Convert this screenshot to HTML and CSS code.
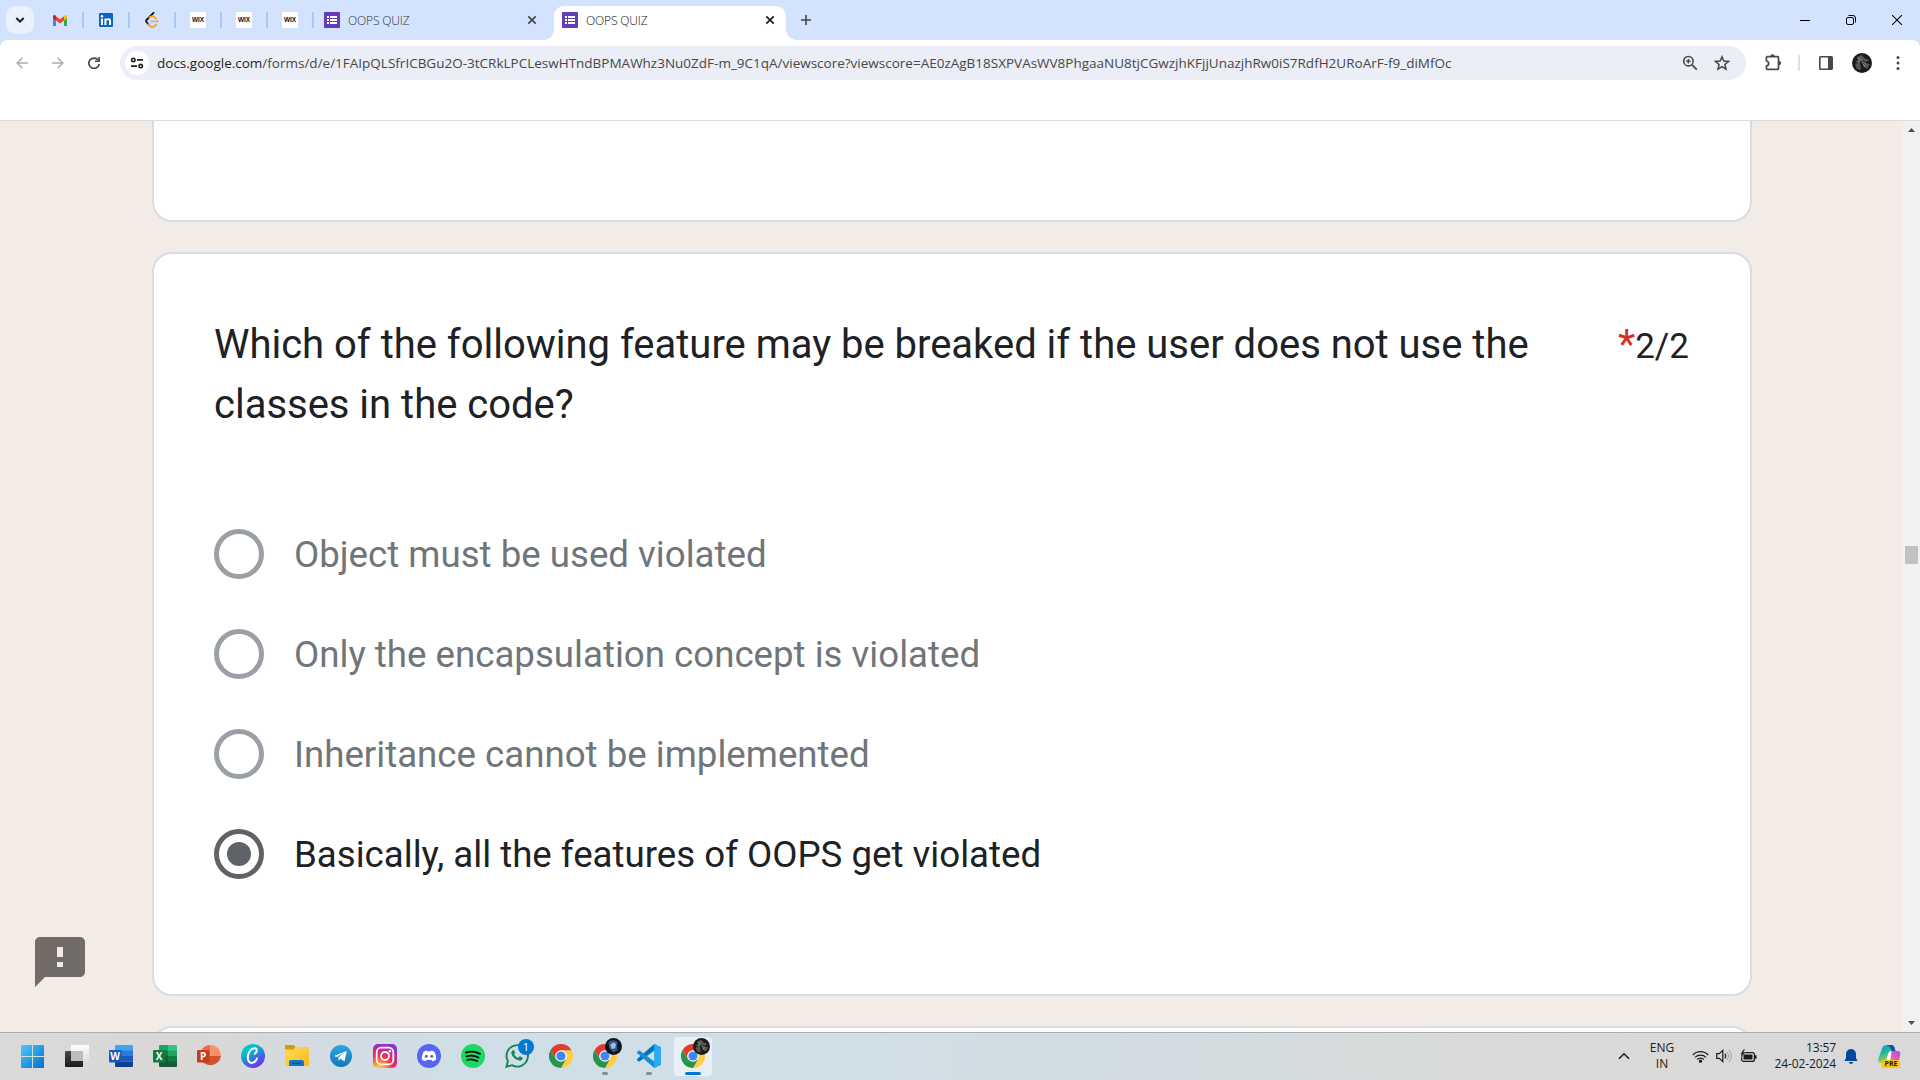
FILE: index.html
```html
<!DOCTYPE html>
<html lang="en">
<head>
<meta charset="utf-8">
<title>OOPS QUIZ</title>
<link rel="stylesheet" href="styles.css">
</head>
<body>
<svg class="defs" width="0" height="0">
  <defs>
    <linearGradient id="gWin" x1="0" y1="0" x2="1" y2="1"><stop offset="0" stop-color="#4cc9fb"/><stop offset="1" stop-color="#0070d0"/></linearGradient>
    <linearGradient id="gDark" x1="0" y1="0" x2="0" y2="1"><stop offset="0" stop-color="#484848"/><stop offset="1" stop-color="#1b1b1b"/></linearGradient>
    <linearGradient id="gLight" x1="0" y1="0" x2="0" y2="1"><stop offset="0" stop-color="#ffffff"/><stop offset="1" stop-color="#dedede"/></linearGradient>
    <linearGradient id="gCanva" x1="0.1" y1="0" x2="0.7" y2="1"><stop offset="0" stop-color="#00c4cc"/><stop offset="0.3" stop-color="#00c0cc"/><stop offset="0.65" stop-color="#3a6fe0"/><stop offset="1" stop-color="#7d2ae8"/></linearGradient>
    <linearGradient id="gFolder" x1="0" y1="0" x2="1" y2="1"><stop offset="0" stop-color="#ffdb5c"/><stop offset="1" stop-color="#fcb91c"/></linearGradient>
    <linearGradient id="gTele" x1="0" y1="0" x2="0" y2="1"><stop offset="0" stop-color="#2ea6de"/><stop offset="1" stop-color="#0f78b6"/></linearGradient>
    <radialGradient id="gInsta" cx="0.25" cy="1.05" r="1.15"><stop offset="0" stop-color="#ffdd55"/><stop offset="0.22" stop-color="#ff9a3c"/><stop offset="0.5" stop-color="#f0304f"/><stop offset="0.75" stop-color="#c8279b"/><stop offset="1" stop-color="#7638d8"/></radialGradient>
    <linearGradient id="gCop1" x1="0" y1="0" x2="0.4" y2="1"><stop offset="0" stop-color="#1590e8"/><stop offset="0.5" stop-color="#25b89a"/><stop offset="1" stop-color="#c8d63c"/></linearGradient>
    <linearGradient id="gCop2" x1="0" y1="1" x2="1" y2="0"><stop offset="0" stop-color="#ff8a5c"/><stop offset="0.5" stop-color="#e65cb0"/><stop offset="1" stop-color="#a24ff0"/></linearGradient>
    <symbol id="close" viewBox="0 0 10 10"><path d="M1.3 1.3l7.4 7.4M8.7 1.3L1.3 8.7" fill="none" stroke="currentColor" stroke-width="1.7"/></symbol>
    <symbol id="forms" viewBox="0 0 16 16"><rect width="16" height="16" rx="1" fill="#673ab7"/><path d="M3 4h2v2H3zM6 4h7v2H6zM3 7h2v2H3zM6 7h7v2H6zM3 10h2v2H3zM6 10h7v2H6z" fill="#fff"/></symbol>
    <symbol id="chrome" viewBox="0 0 48 48">
      <path d="M34 30L24 48A24 24 0 0 0 45.1 12.5H24z" fill="#ffcd40"/>
      <path d="M24 12.5H45.1A24 24 0 0 0 3.2 12L14 30.5z" fill="#e33b2e"/>
      <path d="M14 30.3L3.2 12A24 24 0 0 0 24 48l10-17.7z" fill="#26944a"/>
      <circle cx="24" cy="24" r="11.6" fill="#fff"/><circle cx="24" cy="24" r="9.2" fill="#4285f4"/>
    </symbol>
    <symbol id="avatar" viewBox="0 0 20 20"><circle cx="10" cy="10" r="10" fill="#1b1b1b"/><path d="M5 4l5-2 2 3 5 2-3 2-4-2-4 2zM12 10l6 1-3 5-4-3zM3 12l5-4 1 9-4-1z" fill="#6b6b6b" opacity=".75"/><path d="M6 5l8 6M10 9l3 5M4 9l4-1" stroke="#a8a8a8" stroke-width=".7"/></symbol>
  </defs>
</svg>

<header class="tabstrip">
  <div class="tab-search"><svg width="12" height="12" viewBox="0 0 12 12"><path d="M2.3 4l3.7 3.7L9.7 4" fill="none" stroke="#1f1f1f" stroke-width="2"/></svg></div>
  <div class="pinned"><svg width="14" height="11" viewBox="0 0 14 11"><path d="M0 1v9.2a.7.7 0 0 0 .8.8H3V5z" fill="#4285f4"/><path d="M11 5v6h2.200a.8.8 0 0 0 .8-.8V1.500z" fill="#34a853"/><path d="M11 1.200V5.600l3-2.300V1.500C14 .1 12.500-.5 11.400.400z" fill="#fbbc04"/><path d="M3 5.600V1.200l4 3 4-3v4.400l-4 3z" fill="#ea4335"/><path d="M0 1.500v1.800l3 2.300V1.200L2.600.400C1.500-.5 0 .100 0 1.500z" fill="#c5221f"/></svg></div>
  <div class="pinned"><svg width="14" height="14" viewBox="0 0 14 14"><rect width="14" height="14" rx="1" fill="#0a66c2"/><path d="M2 5.400h2V12H2zM5.400 5.400h2v.9c.4-.7 1.100-1.100 2-1.100 2 0 2.600 1.200 2.600 3.100V12h-2V8.700c0-.9-.2-1.600-1.100-1.600-1 0-1.500.7-1.500 1.700V12h-2z" fill="#fff"/><circle cx="3" cy="3.200" r="1.200" fill="#fff"/></svg></div>
  <div class="pinned"><svg width="14" height="16" viewBox="0 0 14 16"><path d="M8.500.8L1.500 8a1.600 1.600 0 0 0 0 2l2 2.300" fill="none" stroke="#111" stroke-width="1.900" stroke-linecap="round"/><path d="M3.300 12.200l2 2.100c1.200 1 3 1 4.100 0l1.700-1.700M4.500 5.500c2-1.700 3.600-1.500 4.600-.6L11 6.600" fill="none" stroke="#ffa116" stroke-width="1.900" stroke-linecap="round"/><path d="M6 9.400h7" stroke="#b3b3b3" stroke-width="1.800" stroke-linecap="round"/></svg></div>
  <div class="pinned"><span class="wix">WIX</span></div>
  <div class="pinned"><span class="wix">WIX</span></div>
  <div class="pinned"><span class="wix">WIX</span></div>
  <div class="tab"><svg width="16" height="16"><use href="#forms"/></svg><span>OOPS QUIZ</span><svg class="x" width="10" height="10"><use href="#close"/></svg></div>
  <div class="tab active"><svg width="16" height="16"><use href="#forms"/></svg><span>OOPS QUIZ</span><svg class="x" width="10" height="10"><use href="#close"/></svg></div>
  <svg class="newtab" width="10" height="10" viewBox="0 0 10 10"><path d="M5 0v10M0 5h10" stroke="#474747" stroke-width="1.600"/></svg>
  <div class="winctl">
    <svg width="10" height="10"><path d="M0 5.500h10" stroke="#000"/></svg>
    <svg width="10" height="10"><rect x=".5" y="2.500" width="7" height="7" rx="1.500" fill="none" stroke="#000"/><path d="M2.500.5H7a2.500 2.500 0 0 1 2.500 2.500v4.500" fill="none" stroke="#000"/></svg>
    <svg width="10" height="10"><path d="M0 0l10 10M10 0L0 10" stroke="#000" stroke-width="1.100"/></svg>
  </div>
</header>

<div class="corners">
<div class="toolbar">
  <div class="nav">
    <svg width="12" height="12" viewBox="0 0 12 12"><path d="M12 6H1.500M6.400.7L1.100 6l5.300 5.300" fill="none" stroke="#adadad" stroke-width="1.500"/></svg>
    <svg width="12" height="12" viewBox="0 0 12 12"><path d="M0 6h10.500M5.600.7L10.900 6l-5.300 5.300" fill="none" stroke="#adadad" stroke-width="1.500"/></svg>
    <svg width="12" height="12" viewBox="0 0 12 12"><path d="M10.200 3.100A5.200 5.200 0 1 0 11.200 7" fill="none" stroke="#474747" stroke-width="1.700"/><path d="M11.900 0v5H7V3.400h3.300V0z" fill="#474747"/></svg>
  </div>
  <div class="omnibox">
    <div class="site"><svg width="14" height="12" viewBox="0 0 14 12"><g fill="none" stroke="#1f1f1f" stroke-width="1.600"><circle cx="3.300" cy="2.900" r="1.700"/><path d="M7 2.900h6M1 9.100h6"/><circle cx="10.700" cy="9.100" r="1.700"/></g></svg></div>
    <div class="url"><b>docs.google.com</b>/forms/d/e/1FAIpQLSfrICBGu2O-3tCRkLPCLeswHTndBPMAWhz3Nu0ZdF-m_9C1qA/viewscore?viewscore=AE0zAgB18SXPVAsWV8PhgaaNU8tjCGwzjhKFjjUnazjhRw0iS7RdfH2URoArF-f9_diMfOc</div>
    <svg width="16" height="16" viewBox="0 0 16 16"><circle cx="6.400" cy="6.200" r="4.700" fill="none" stroke="#474747" stroke-width="1.600"/><path d="M9.800 9.700l5 5" stroke="#474747" stroke-width="1.800"/><path d="M6.400 4v4.400M4.200 6.200h4.400" stroke="#474747" stroke-width="1.500"/></svg>
    <svg width="16" height="16" viewBox="0 0 16 16"><path d="M8 1.800l1.800 4.300 4.700.4-3.600 3 1.100 4.600L8 11.700l-4 2.400 1.100-4.600-3.600-3 4.700-.4z" fill="none" stroke="#474747" stroke-width="1.500"/></svg>
  </div>
  <div class="tools">
    <svg width="18" height="18" viewBox="0 0 18 18"><path d="M2.400 7V3.500q0-.9.900-.9h10.300q.9 0 .9.900v11q0 .9-.9.900H3.300q-.9 0-.9-.9V12c3-.6 3-4.400 0-5z" fill="none" stroke="#474747" stroke-width="1.700" stroke-linejoin="round"/><path d="M6.400 2.400a2.100 2.100 0 0 1 4.200 0zM15 7a2.100 2.100 0 0 1 0 4.200z" fill="#474747"/></svg>
    <i></i>
    <svg width="14" height="14" viewBox="0 0 14 14"><rect x=".8" y=".8" width="12.400" height="12.400" rx=".8" fill="none" stroke="#474747" stroke-width="1.600"/><path d="M9 1h4v12H9z" fill="#474747"/></svg>
    <svg width="20" height="20"><use href="#avatar"/></svg>
    <svg width="4" height="14" viewBox="0 0 4 14"><g fill="#474747"><circle cx="2" cy="1.600" r="1.500"/><circle cx="2" cy="7" r="1.500"/><circle cx="2" cy="12.400" r="1.500"/></g></svg>
  </div>
</div>
</div>

<main class="viewport">
  <section class="form">
    <article class="card previous"></article>
    <article class="card question">
      <div class="heading">
        <h1>Which of the following feature may be breaked if the user does not use the classes in the code?</h1>
        <div class="score"><em>*</em>2/2</div>
      </div>
      <div class="option"><span class="radio"></span><span>Object must be used violated</span></div>
      <div class="option"><span class="radio"></span><span>Only the encapsulation concept is violated</span></div>
      <div class="option"><span class="radio"></span><span>Inheritance cannot be implemented</span></div>
      <div class="option selected"><span class="radio"></span><span>Basically, all the features of OOPS get violated</span></div>
    </article>
    <article class="card next"></article>
  </section>
  <aside class="scrollbar">
    <svg width="7" height="4"><path d="M3.500 0L7 4H0z" fill="#505050"/></svg>
    <div class="thumb"></div>
    <svg width="7" height="4"><path d="M0 0h7L3.500 4z" fill="#505050"/></svg>
  </aside>
  <svg class="report" width="50" height="50" viewBox="2 2 20 20"><path d="M20 2H4c-1.100 0-2 .9-2 2v18l4-4h14c1.100 0 2-.9 2-2V4c0-1.100-.9-2-2-2zm-6.800 12h-2.400v-2h2.400zm0-4h-2.400V6h2.400z" fill="#716c68"/></svg>
</main>

<footer class="taskbar">
  <div class="apps">
    <div class="app"><svg width="23" height="23" viewBox="0 0 23 23"><path d="M0 1a1 1 0 0 1 1-1h10v11H0zM12 0h10a1 1 0 0 1 1 1v10H12zM0 12h11v11H1a1 1 0 0 1-1-1zM12 12h11v10a1 1 0 0 1-1 1H12z" fill="url(#gWin)"/></svg></div>
    <div class="app"><svg width="24" height="24" viewBox="0 0 24 24"><rect x="0" y="7" width="18" height="16" rx="1" fill="url(#gDark)"/><rect x="6" y="1" width="18" height="16" rx="1" fill="url(#gLight)"/><path d="M6 7h12v10H6z" fill="#bcbcbc"/></svg></div>
    <div class="app"><svg width="24" height="24" viewBox="0 0 24 24"><path d="M6 2a1 1 0 0 1 1-1h16a1 1 0 0 1 1 1v5H6z" fill="#41a5ee"/><path d="M6 6.500h18V12H6z" fill="#2b7cd3"/><path d="M6 12h18v5.500H6z" fill="#185abd"/><path d="M6 17.500h18V22a1 1 0 0 1-1 1H7a1 1 0 0 1-1-1z" fill="#103f91"/><rect y="6" width="12.500" height="12.500" rx="1" fill="#185abd"/><text class="letter" x="6.200" y="15.700">W</text></svg></div>
    <div class="app"><svg width="24" height="24" viewBox="0 0 24 24"><path d="M6 2a1 1 0 0 1 1-1h8v6H6z" fill="#21a366"/><path d="M15 1h8a1 1 0 0 1 1 1v5h-9z" fill="#33c481"/><path d="M6 6.500h9V12H6z" fill="#107c41"/><path d="M15 6.500h9V12h-9z" fill="#21a366"/><path d="M6 12h18v10a1 1 0 0 1-1 1H7a1 1 0 0 1-1-1z" fill="#185c37"/><path d="M15 12h9v5.500h-9z" fill="#107c41"/><rect y="6" width="12.500" height="12.500" rx="1" fill="#107c41"/><text class="letter" x="6.200" y="15.700">X</text></svg></div>
    <div class="app"><svg width="24" height="24" viewBox="0 0 24 24"><path d="M13.500 1A10.700 10.700 0 0 0 2.800 12h10.700z" fill="#ed6c47"/><path d="M13.500 1A10.700 10.700 0 0 1 24 12H13.500z" fill="#ff8f6b"/><path d="M2.800 12A10.700 10.700 0 0 0 24 12z" fill="#d35230"/><rect y="6" width="12.500" height="12.500" rx="1" fill="#c43e1c"/><text class="letter" x="6.200" y="15.700">P</text></svg></div>
    <div class="app"><svg width="24" height="24" viewBox="0 0 24 24"><circle cx="12" cy="12" r="12" fill="url(#gCanva)"/><path d="M13.800 9.700c2-.8 3-4.800.4-5.400C10.300 3.600 6.500 9 6.800 14c.2 3.300 2 5.300 4.500 4.800 2.400-.4 4-2.400 4.700-4.300" fill="none" stroke="#fff" stroke-width="2" stroke-linecap="round"/></svg></div>
    <div class="app"><svg width="24" height="24" viewBox="0 0 24 24"><path d="M0 2a1 1 0 0 1 1-1h7.500l2 2-2 3H0z" fill="#d99a00"/><path d="M0 5.500h8.500L11 3h12a1 1 0 0 1 1 1v17a1 1 0 0 1-1 1H1a1 1 0 0 1-1-1z" fill="url(#gFolder)"/><path d="M4 22v-4a2 2 0 0 1 2-2h11a2 2 0 0 1 2 2v4z" fill="#1074c5"/><path d="M7 18.700h9v1.200H7z" fill="#0b4f91"/></svg></div>
    <div class="app"><svg width="22" height="22" viewBox="0 0 22 22"><circle cx="11" cy="11" r="11" fill="url(#gTele)"/><path d="M4 11l12.700-4.900-2.200 10.500-4-2.900-1.900 1.800-.3-3 6-5-7.600 4.600z" fill="#fff"/></svg></div>
    <div class="app"><svg width="24" height="24" viewBox="0 0 24 24"><rect width="24" height="24" rx="5" fill="url(#gInsta)"/><g fill="none" stroke="#fff" stroke-width="1.800"><rect x="3.700" y="3.700" width="16.600" height="16.600" rx="4.500"/><circle cx="12" cy="12" r="4"/></g><circle cx="16.900" cy="7.200" r="1.200" fill="#fff"/></svg></div>
    <div class="app"><svg width="24" height="24" viewBox="0 0 24 24"><circle cx="12" cy="12" r="12" fill="#5865f2"/><path d="M9.800 6.500l.6 1q1.600-.3 3.200 0l.6-1q1.800.3 3.200 1.200c1.300 2.500 2 5 1.800 7.700-1.200 1-2.500 1.600-3.900 1.900l-.9-1.500q-2.400.6-4.800 0l-.9 1.500c-1.400-.3-2.700-.9-3.900-1.900-.2-2.700.5-5.200 1.800-7.700q1.400-.9 3.200-1.200z" fill="#fff"/><circle cx="9.300" cy="12.300" r="1.500" fill="#5865f2"/><circle cx="14.700" cy="12.300" r="1.500" fill="#5865f2"/></svg></div>
    <div class="app"><svg width="24" height="24" viewBox="0 0 24 24"><circle cx="12" cy="12" r="12" fill="#1ed760"/><path d="M5 8.500q7.500-2.200 14 1.300M5.500 12.300q6.500-1.800 12 1.300M6.200 15.800q5.300-1.300 9.800 1.200" fill="none" stroke="#0b0b0b" stroke-width="1.900" stroke-linecap="round"/></svg></div>
    <div class="app"><svg width="24" height="24" viewBox="0 0 24 24"><path d="M1.400 22.700l1.500-5.600A10.700 10.700 0 1 1 7 21.200z" fill="none" stroke="#168653" stroke-width="1.900"/><path d="M7.500 6.500c.8-.7 1.500-.5 1.800.2l.8 1.900c.1.500-.3 1-.9 1.700.9 1.700 2.200 2.900 4 3.700l1.200-1.400c.3-.3.600-.3 1-.1l1.900.9c.5.300.4 1 .1 1.700-.6 1.200-2 1.800-3.400 1.500-4-1-6.600-3.700-7.600-6.900-.3-1.300.2-2.400 1.100-3.200z" fill="#168653"/></svg><span class="count">1</span></div>
    <div class="app"><svg width="24" height="24"><use href="#chrome"/></svg></div>
    <div class="app running"><svg width="24" height="24"><use href="#chrome"/></svg><svg class="profile" width="17" height="17" viewBox="0 0 20 20"><circle cx="10" cy="10" r="10" fill="#10141c"/><path d="M4 5q5-5 11 0l-1 5 1 4-5 3-5-5z" fill="#31568d"/><path d="M6 8l4-3 3 2-1 5-4 1z" fill="#9ebbd9"/></svg></div>
    <div class="app running"><svg width="24" height="24" viewBox="0 0 24 24"><path d="M18 0v6L2.200 17.700.3 16.200q-.6-.7 0-1.400L17 .2z" fill="#0074be"/><path d="M18 24v-6L2.200 6.300.3 7.800q-.6.700 0 1.400L17 23.800z" fill="#168fd8"/><path d="M17.500 0L24 3v18l-6.500 3q-.7 0-.4-1V1q-.3-1 .4-1z" fill="#29a9f2"/></svg></div>
    <div class="app running current"><svg width="24" height="24"><use href="#chrome"/></svg><svg class="profile" width="17" height="17"><use href="#avatar"/></svg></div>
  </div>
  <div class="tray">
    <svg width="12" height="8" viewBox="0 0 12 8"><path d="M1 6.800l5-5 5 5" fill="none" stroke="#1b1b1b" stroke-width="1.500"/></svg>
    <div class="lang">ENG<br>IN</div>
    <svg class="wifi" width="17" height="13" viewBox="0 0 17 13"><g fill="none" stroke="#1b1b1b" stroke-width="1.200"><path d="M.8 5A10.600 10.600 0 0 1 16.200 5M3 7.400a7.700 7.700 0 0 1 11 0M5.200 9.500a4.600 4.600 0 0 1 6.600 0"/></g><circle cx="8.500" cy="11.200" r="1.600" fill="#1b1b1b"/></svg>
    <svg class="sound" width="16" height="14" viewBox="0 0 16 14"><g fill="none" stroke-width="1.200"><path d="M.7 4.700h2.600L6.800 1.400v11.200L3.300 9.300H.7zM9 4.700q1.500 2.300 0 4.600" stroke="#1b1b1b"/><path d="M11 3q3 4 0 8M13 1q4.300 6 0 12" stroke="#aaa"/></g></svg>
    <svg width="17" height="14" viewBox="0 0 17 14"><rect x="1.600" y="3.600" width="12.800" height="8.800" rx="2" fill="none" stroke="#1b1b1b" stroke-width="1.200"/><path d="M3.500 5.500h9v5h-9z" fill="#1b1b1b"/><path d="M15 6.300h1.500v3.400H15z" fill="#1b1b1b"/><path d="M3.800 0L.3 5h2L1.500 8.500 5.500 3.800H3.600L5 0z" fill="#1b1b1b" stroke="#d9d9d9" stroke-width=".4"/></svg>
    <div class="clock">13:57<br>24-02-2024</div>
    <svg class="bell" width="14" height="15" viewBox="0 0 14 15"><path d="M7 0a5 5 0 0 0-5 5v4L.4 12h13.200L12 9V5a5 5 0 0 0-5-5zM4.800 13h4.400Q8.700 15 7 15t-2.200-2z" fill="#00489c"/></svg>
    <div class="copilot"><svg width="24" height="24" viewBox="0 0 24 24"><path d="M5 4.500Q6 1 9.500 1h5q2.300 0 3 2.500L18.500 7H14q-2 0-2.700 2.300L9 17q-.6 2-2.500 2H4q-3.500 0-2.700-4z" fill="url(#gCop1)"/><path d="M9.500 1h5q2.300 0 3 2.500L18.500 7h-4q-1-5-5-6z" fill="#164bb8"/><path d="M15 7h5.500q3.500 0 2.700 4L22 16q-.8 3-4 3h-7l2.200-10q.5-2 1.800-2z" fill="url(#gCop2)"/><path d="M14.500 7q-2.200 0-3 2.500L9 18h2q1.800-.5 2.500-3z" fill="#fff"/></svg><b>PRE</b></div>
  </div>
</footer>
</body>
</html>
```
FILE: styles.css
```css
* { box-sizing: border-box; }
body {
  margin: 0;
  width: 1920px;
  height: 1080px;
  overflow: hidden;
  display: flex;
  flex-direction: column;
  font-family: "Open Sans", "Noto Sans", sans-serif;
  background: #fff;
}
svg { display: block; flex: none; }
.defs { position: absolute; }

/* Tab strip */
.tabstrip { height: 40px; flex: none; display: flex; align-items: center; background: #d3e3fd; padding-left: 6px; }
.tab-search { width: 28px; height: 28px; border-radius: 10px; background: #e9f1fe; display: grid; place-items: center; margin-right: 4px; }
.pinned { width: 46px; height: 16px; display: flex; align-items: center; justify-content: center; border-right: 2px solid #a8c7fa; }
.wix { width: 16px; height: 16px; background: #fff; color: #111; font: bold 6.5px/16px "Liberation Sans", sans-serif; text-align: center; letter-spacing: -.1px; }
.tab { width: 240px; height: 34px; padding: 0 17px 6px 10px; display: flex; align-items: center; gap: 8px; align-self: flex-end; color: #333; font-size: 12px; }
.tab span { flex: 1; font-weight: 300; letter-spacing: -.15px; }
.tab .x { color: #474747; }
.tab.active { position: relative; width: 232px; padding: 0 11px 6px 8px; background: #fff; border-radius: 10px 10px 0 0; color: #111; }
.tab.active .x { color: #1f1f1f; }
.tab.active::before, .tab.active::after { content: ""; position: absolute; bottom: 0; width: 10px; height: 10px; }
.tab.active::before { left: -10px; background: radial-gradient(circle at 0 0, transparent 9.500px, #fff 10px); }
.tab.active::after { right: -10px; background: radial-gradient(circle at 100% 0, transparent 9.500px, #fff 10px); }
.newtab { margin-left: 15px; }
.winctl { margin-left: auto; display: flex; gap: 36px; padding-right: 18px; }

/* Toolbar */
.corners { background: #d3e3fd; flex: none; }
.toolbar { height: 81px; background: #fff; border-radius: 8px 8px 0 0; border-bottom: 1px solid #dcdcdc; display: flex; align-items: flex-start; padding-top: 6px; }
.nav { width: 120px; height: 34px; padding-left: 16px; display: flex; gap: 24px; align-items: center; }
.omnibox { width: 1626px; height: 34px; border-radius: 17px; background: #ebeef7; display: flex; align-items: center; gap: 16px; padding: 0 16px 0 5px; }
.site { width: 24px; height: 24px; border-radius: 50%; background: #fff; display: grid; place-items: center; }
.url { flex: 1; margin-left: -8px; white-space: nowrap; color: #474747; font-size: 13.5px; line-height: 20px; }
.url b { font-weight: 400; color: #1f1f1f; }
.tools { height: 34px; flex: 1; display: flex; align-items: center; padding-left: 18px; }
.tools i { width: 2px; height: 16px; background: #d3e3fd; margin: 0 19px 0 16px; }
.tools svg:nth-of-type(3) { margin: 0 24px 0 19px; }

/* Page */
.viewport { height: 911px; flex: none; position: relative; display: flex; background: #f3ebe6; }
.form { width: 1903px; height: 911px; overflow: hidden; padding-left: 152px; display: flex; flex-direction: column; gap: 30px; }
.card { width: 1600px; flex: none; background: #fff; border: 2px solid #dadce0; border-radius: 20px; }
.previous { height: 101px; border-top: 0; border-radius: 0 0 20px 20px; }
.question { height: 744px; padding: 60px; font-family: Roboto, sans-serif; }
.next { height: 60px; }
.heading { display: flex; justify-content: space-between; height: 190px; color: #202124; }
h1 { width: 1340px; margin: 0; padding-top: 1px; font-weight: 400; font-size: 40px; line-height: 60px; letter-spacing: -.015px; }
.score { margin-right: 1px; font-size: 35px; line-height: 62px; }
.score em { font-style: normal; color: #d93025; font-size: 40px; }
.option { height: 100px; display: flex; align-items: center; gap: 30px; font-size: 36.667px; color: #70757a; }
.radio { width: 50px; height: 50px; border: 5px solid #9aa0a6; border-radius: 50%; display: grid; place-items: center; }
.selected { color: #202124; }
.selected .radio { border-color: #5f6368; }
.selected .radio::after { content: ""; width: 24px; height: 24px; border-radius: 50%; background: #5f6368; }
.scrollbar { width: 17px; background: #f1f1f1; display: flex; flex-direction: column; align-items: center; justify-content: space-between; padding: 7px 0; }
.thumb { width: 13px; height: 18px; background: #c1c1c1; margin-top: -43px; }
.report { position: absolute; left: 35px; top: 816px; }

/* Taskbar */
.taskbar { height: 48px; flex: none; display: flex; justify-content: space-between; border-top: 1px solid #a9adaf; padding-left: 10px; background: linear-gradient(90deg, #d9dad9 0, #dad8d6 150px, #d7d9da 250px, #d2dce5 340px, #d0dfe7 480px, #d0dfe7 800px, #d4dcdf 1250px, #dcdad8 1550px, #d9d9d9 1750px); }
.apps { display: flex; }
.app { position: relative; width: 44px; height: 46px; display: grid; place-items: center; }
.app:nth-child(n+2) { left: 1px; }
.letter { fill: #fff; font: bold 10px "Open Sans", sans-serif; text-anchor: middle; }
.count { position: absolute; right: 5px; top: 6px; width: 16px; height: 16px; border-radius: 50%; background: #0078d4; color: #fff; font-size: 11px; line-height: 16px; text-align: center; }
.profile { position: absolute; right: 5px; top: 5px; }
.running::after { content: ""; position: absolute; left: 19px; bottom: 4px; width: 6px; height: 3px; border-radius: 2px; background: #858b90; }
.current::before { content: ""; position: absolute; left: 3px; top: 4px; width: 38px; height: 39px; border-radius: 4px; background: #e9f0f4; }
.current svg:first-child { position: relative; }
.current::after { left: 14px; width: 16px; background: #0078d4; }
.tray { height: 46px; display: flex; align-items: center; color: #1b1b1b; font-size: 12px; line-height: 16px; }
.lang { width: 40px; margin-left: 12px; text-align: center; }
.wifi { margin-left: 10px; }
.sound { margin: 0 8px 0 7px; }
.clock { width: 79px; text-align: right; letter-spacing: -.1px; }
.bell { margin: 0 19px 0 8px; }
.copilot { position: relative; width: 24px; height: 24px; margin-right: 19px; }
.copilot b { position: absolute; left: 5px; bottom: 0; width: 18px; height: 8px; border-radius: 2px; background: #ffc20e; font-size: 7px; line-height: 8px; text-align: center; }
```
